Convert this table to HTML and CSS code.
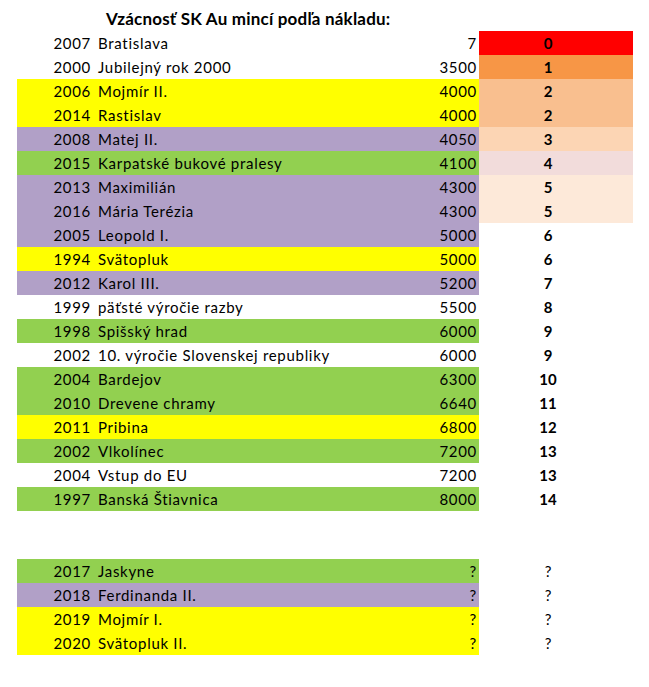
FILE: index.html
```html
<!DOCTYPE html>
<html lang="sk">
<head>
<meta charset="utf-8">
<title>Vzácnosť SK Au mincí</title>
<link rel="stylesheet" href="styles.css">
</head>
<body>
<div class="sheet">
  <div class="title">Vzácnosť SK Au mincí podľa nákladu:</div>
  <div class="rows">
    <div class="row"><div class="main"><span class="yr">2007</span><span class="nm">Bratislava</span><span class="num">7</span></div><div class="rank r0">0</div></div>
    <div class="row"><div class="main"><span class="yr">2000</span><span class="nm">Jubilejný rok 2000</span><span class="num">3500</span></div><div class="rank r1">1</div></div>
    <div class="row"><div class="main yellow"><span class="yr">2006</span><span class="nm">Mojmír II.</span><span class="num">4000</span></div><div class="rank r2">2</div></div>
    <div class="row"><div class="main yellow"><span class="yr">2014</span><span class="nm">Rastislav</span><span class="num">4000</span></div><div class="rank r2">2</div></div>
    <div class="row"><div class="main purple"><span class="yr">2008</span><span class="nm">Matej II.</span><span class="num">4050</span></div><div class="rank r3">3</div></div>
    <div class="row"><div class="main green"><span class="yr">2015</span><span class="nm">Karpatské bukové pralesy</span><span class="num">4100</span></div><div class="rank r4">4</div></div>
    <div class="row"><div class="main purple"><span class="yr">2013</span><span class="nm">Maximilián</span><span class="num">4300</span></div><div class="rank r5">5</div></div>
    <div class="row"><div class="main purple"><span class="yr">2016</span><span class="nm">Mária Terézia</span><span class="num">4300</span></div><div class="rank r5">5</div></div>
    <div class="row"><div class="main purple"><span class="yr">2005</span><span class="nm">Leopold I.</span><span class="num">5000</span></div><div class="rank">6</div></div>
    <div class="row"><div class="main yellow"><span class="yr">1994</span><span class="nm">Svätopluk</span><span class="num">5000</span></div><div class="rank">6</div></div>
    <div class="row"><div class="main purple"><span class="yr">2012</span><span class="nm">Karol III.</span><span class="num">5200</span></div><div class="rank">7</div></div>
    <div class="row"><div class="main"><span class="yr">1999</span><span class="nm">päťsté výročie razby</span><span class="num">5500</span></div><div class="rank">8</div></div>
    <div class="row"><div class="main green"><span class="yr">1998</span><span class="nm">Spišský hrad</span><span class="num">6000</span></div><div class="rank">9</div></div>
    <div class="row"><div class="main"><span class="yr">2002</span><span class="nm">10. výročie Slovenskej republiky</span><span class="num">6000</span></div><div class="rank">9</div></div>
    <div class="row"><div class="main green"><span class="yr">2004</span><span class="nm">Bardejov</span><span class="num">6300</span></div><div class="rank">10</div></div>
    <div class="row"><div class="main green"><span class="yr">2010</span><span class="nm">Drevene chramy</span><span class="num">6640</span></div><div class="rank">11</div></div>
    <div class="row"><div class="main yellow"><span class="yr">2011</span><span class="nm">Pribina</span><span class="num">6800</span></div><div class="rank">12</div></div>
    <div class="row"><div class="main green"><span class="yr">2002</span><span class="nm">Vlkolínec</span><span class="num">7200</span></div><div class="rank">13</div></div>
    <div class="row"><div class="main"><span class="yr">2004</span><span class="nm">Vstup do EU</span><span class="num">7200</span></div><div class="rank">13</div></div>
    <div class="row"><div class="main green"><span class="yr">1997</span><span class="nm">Banská Štiavnica</span><span class="num">8000</span></div><div class="rank">14</div></div>
    <div class="row"></div>
    <div class="row"></div>
    <div class="row"><div class="main green"><span class="yr">2017</span><span class="nm">Jaskyne</span><span class="num">?</span></div><div class="rank unk">?</div></div>
    <div class="row"><div class="main purple"><span class="yr">2018</span><span class="nm">Ferdinanda II.</span><span class="num">?</span></div><div class="rank unk">?</div></div>
    <div class="row"><div class="main yellow"><span class="yr">2019</span><span class="nm">Mojmír I.</span><span class="num">?</span></div><div class="rank unk">?</div></div>
    <div class="row"><div class="main yellow"><span class="yr">2020</span><span class="nm">Svätopluk II.</span><span class="num">?</span></div><div class="rank unk">?</div></div>
  </div>
</div>
</body>
</html>
```
FILE: styles.css
```css
html, body {
  margin: 0;
  padding: 0;
  background: #ffffff;
}
body {
  font-family: Lato, "Open Sans", "Liberation Sans", sans-serif;
  font-size: 15px;
  color: #000000;
}
.sheet {
  padding-left: 17px;
}
.title {
  height: 31px;
  box-sizing: border-box;
  padding-top: 7px;
  padding-left: 89px;
  line-height: 24px;
  font-size: 17px;
  font-weight: bold;
  letter-spacing: 0.2px;
}
.rows {
  display: flex;
  flex-direction: column;
  width: 616px;
}
.row {
  display: grid;
  grid-template-columns: 462px 154px;
  height: 24px;
}
.main,
.rank {
  box-sizing: border-box;
  padding-top: 1px;
  line-height: 23px;
}
.main {
  display: grid;
  grid-template-columns: 77px 1fr auto;
  background: #ffffff;
  letter-spacing: 0.7px;
}
.yr {
  text-align: right;
  padding-right: 3px;
}
.nm {
  padding-left: 4px;
  white-space: nowrap;
}
.num {
  text-align: right;
  padding-right: 2px;
}
.rank {
  text-align: center;
  padding-right: 16px;
  font-weight: bold;
}
.rank.unk {
  font-weight: normal;
}
.yellow { background: #ffff00; }
.purple { background: #b1a0c7; }
.green { background: #92d050; }
.r0 { background: #ff0000; }
.r1 { background: #f79646; }
.r2 { background: #f9bf8f; }
.r3 { background: #fcd5b4; }
.r4 { background: #f2dcdb; }
.r5 { background: #fde9d9; }
```
